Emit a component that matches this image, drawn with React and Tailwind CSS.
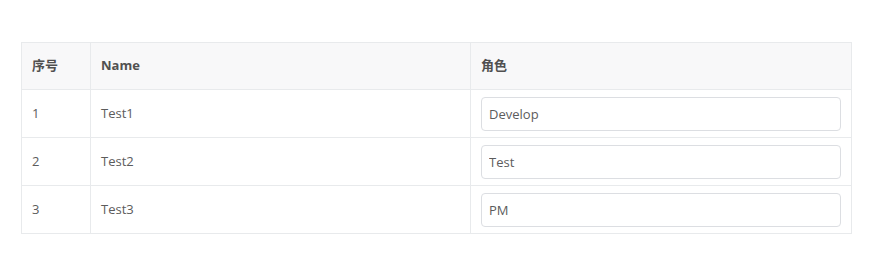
import { useState } from 'react';

const initialRows = [
  { id: 1, name: 'Test1', role: 'Develop' },
  { id: 2, name: 'Test2', role: 'Test' },
  { id: 3, name: 'Test3', role: 'PM' },
];

const App = () => {
  const [rows, setRows] = useState(initialRows);

  const updateRole = (id, value) => {
    setRows(rows.map(r => (r.id === id ? { ...r, role: value } : r)));
  };

  return (
    <div
      className="bg-white w-[870px] h-[263px] pt-[42px] pl-[21px]"
      style={{ fontFamily: '"Open Sans", "Noto Sans CJK SC", sans-serif' }}
    >
      <table className="w-[830px] border-collapse border border-[#e8eaec] text-[13px] text-[#5c5c5c] table-fixed">
        <colgroup>
          <col className="w-[69px]" />
          <col className="w-[380px]" />
          <col className="w-[381px]" />
        </colgroup>
        <thead>
          <tr className="bg-[#f8f8f9] h-[47px] text-[#505050]">
            <th className="border border-[#e8eaec] text-left font-bold px-[10px]">序号</th>
            <th className="border border-[#e8eaec] text-left font-bold px-[10px]">Name</th>
            <th className="border border-[#e8eaec] text-left font-bold px-[10px]">角色</th>
          </tr>
        </thead>
        <tbody>
          {rows.map(row => (
            <tr key={row.id} className="h-[48px]">
              <td className="border border-[#e8eaec] px-[10px]">{row.id}</td>
              <td className="border border-[#e8eaec] px-[10px]">{row.name}</td>
              <td className="border border-[#e8eaec] px-[10px]">
                <input
                  value={row.role}
                  onChange={e => updateRole(row.id, e.target.value)}
                  className="w-full h-[34px] border border-[#dcdee2] rounded-[4px] px-[7px] text-[13px] text-[#5c5c5c] outline-none"
                />
              </td>
            </tr>
          ))}
        </tbody>
      </table>
    </div>
  );
};

export default App;
